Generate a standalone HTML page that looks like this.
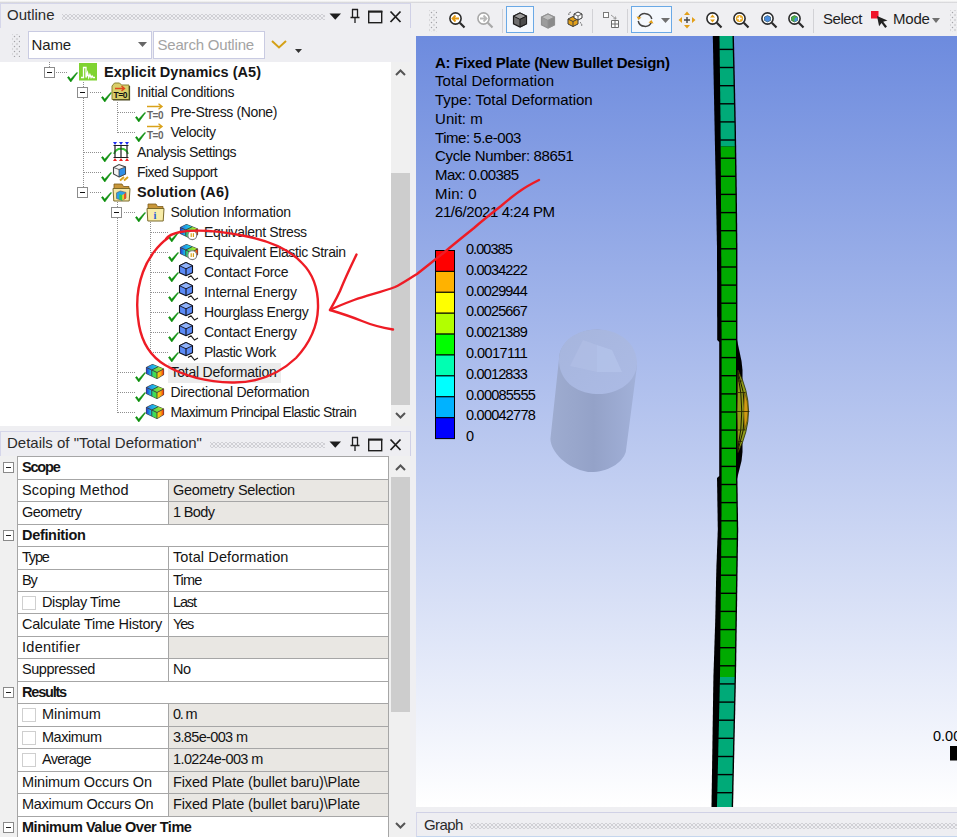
<!DOCTYPE html>
<html>
<head>
<meta charset="utf-8">
<title>Mechanical</title>
<style>
*{box-sizing:border-box;margin:0;padding:0}
html,body{width:957px;height:837px;overflow:hidden;background:#efeff2}
body{position:relative;font-family:"Liberation Sans",sans-serif;color:#1a1a1a}
.abs{position:absolute}
svg{position:absolute;overflow:visible}
#topline{left:0;top:0;width:957px;height:3px;background:linear-gradient(to bottom,#fafafa 0,#f6f6f6 45%,#cfcfd2 70%,#e6e6ea 100%)}
/* panel titles */
.ptitle{position:absolute;left:0;width:411px;border-top:1px solid #d5d6ea;border-right:1px solid #cfd0e6;border-left:1px solid #d5d6ea;background:#eeeef2;font-size:15px;color:#2b2b2b;white-space:nowrap}
.ptitle .t{position:absolute;left:6px;top:2px;line-height:18px}
.dots{position:absolute;height:6px;background-image:radial-gradient(circle,#c2c2c8 0.6px,transparent 0.95px),radial-gradient(circle,#c2c2c8 0.6px,transparent 0.95px);background-size:4px 4px,4px 4px;background-position:0 0,2px 2px}
.vdots{position:absolute;width:8px;background-image:radial-gradient(circle,#a4a4a8 0.7px,transparent 1.05px),radial-gradient(circle,#a4a4a8 0.7px,transparent 1.05px);background-size:5px 5px,5px 5px;background-position:0 0,2.5px 2.5px}
/* tree */
#tree{left:0;top:62px;width:391px;height:364px;background:#fff;overflow:hidden}
.tr{position:absolute;font-size:14px;white-space:nowrap;color:#161616;line-height:20px;height:20px}
.tr.b{font-weight:bold;font-size:14.5px;letter-spacing:0}
.bx{position:absolute;width:11px;height:11px;border:1px solid #8c8c8c;background:#fff}
.bx:after{content:"";position:absolute;left:2px;top:4px;width:5px;height:1px;background:#111}
.hd{position:absolute;height:1px;background-image:linear-gradient(to right,#8f8f8f 1px,transparent 1px);background-size:2px 1px}
.vd{position:absolute;width:1px;background-image:linear-gradient(to bottom,#8f8f8f 1px,transparent 1px);background-size:1px 2px}
.sb{position:absolute;background:#f0f0f0}
.thumb{position:absolute;background:#cdcdcd}
/* details grid */
#grid{left:0;top:456px;width:391px;height:381px;background:#f0f0f0;overflow:hidden}
.row{position:absolute;left:17px;width:372px;height:23.5px;border:1px solid #a6a6a6;background:#fff;font-size:14.5px;white-space:nowrap;color:#141414}
.row .n{position:absolute;left:0;top:0;width:151px;height:100%;border-right:1px solid #a6a6a6;padding-left:4px;line-height:20px;overflow:hidden}
.row .v{position:absolute;left:151px;top:0;right:0;height:100%;padding-left:4px;line-height:20px;overflow:hidden}
.row .v.g{background:#e9e7e3}
.row.h .n{width:100%;border-right:none;font-weight:bold}
.pm{position:absolute;left:3px;width:11px;height:11px;border:1px solid #8a8a8a;background:#fff}
.pm:after{content:"";position:absolute;left:2px;top:4px;width:5px;height:1px;background:#222}
.cb{display:inline-block;width:14px;height:14px;border:1px solid #cfcfcf;background:#fff;vertical-align:-3px;margin:0 6px 0 0}
/* viewport */
#vp{left:416px;top:36px;width:541px;height:771px;background:linear-gradient(to bottom,#6d8bde 0%,#ffffff 100%);overflow:hidden}
.vt{position:absolute;left:19px;font-size:15px;white-space:nowrap;color:#000;line-height:18px}
.vt.b{font-weight:bold}
.lg{position:absolute;left:50px;font-size:14.5px;white-space:nowrap;color:#000;line-height:18px}
</style>
</head>
<body>
<svg style="left:0;top:0" width="0" height="0"><defs>
<linearGradient id="gtl" x1="0" y1="0" x2="1" y2="0"><stop offset="0" stop-color="#2a6ae8"/><stop offset="1" stop-color="#19e8e0"/></linearGradient>
<linearGradient id="gtr" x1="0" y1="0" x2="1" y2="0"><stop offset="0" stop-color="#30d860"/><stop offset="1" stop-color="#c8e820"/></linearGradient>
<linearGradient id="gfl" x1="0" y1="0" x2="1" y2="0"><stop offset="0" stop-color="#2438d8"/><stop offset="1" stop-color="#18d8e8"/></linearGradient>
<linearGradient id="gfr" x1="0" y1="0" x2="1" y2="0"><stop offset="0" stop-color="#20d890"/><stop offset="1" stop-color="#60e020"/></linearGradient>
<linearGradient id="grr" x1="0" y1="0" x2="1" y2="0"><stop offset="0" stop-color="#e8e818"/><stop offset="0.600" stop-color="#f8a010"/><stop offset="1" stop-color="#f03010"/></linearGradient>
</defs></svg>
<div id="topline" class="abs"></div>

<!-- Outline title -->
<div class="ptitle" style="top:3px;height:25px"><span class="t">Outline</span><div class="dots" style="left:61px;top:10px;width:263px"></div>
<svg style="left:329px;top:2.500px" width="78" height="18" viewBox="0 0 78 18"><path d="M-0.500 6.500h11.500l-5.750 6.300z" fill="#1e1e1e"/><path d="M22.5 2v8M27.5 2v8M22 2.5h6M20.500 10.500h9M25 11v5" stroke="#1e1e1e" stroke-width="1.300" fill="none"/><rect x="38.700" y="4.700" width="13" height="11" fill="none" stroke="#1e1e1e" stroke-width="1.400"/><path d="M38 4.500h14.400" stroke="#1e1e1e" stroke-width="2"/><path d="M60.500 4.500l10 10.500M70.500 4.500l-10 10.500" stroke="#1e1e1e" stroke-width="1.800"/></svg>
</div>

<!-- Outline toolbar -->
<div class="abs" id="otb" style="left:0;top:28px;width:411px;height:34px;background:#eeeef2">
<div class="vdots" style="left:12px;top:6px;height:23px"></div>
<div class="abs" style="left:28px;top:3px;width:124px;height:28px;background:#fff;border:1px solid #c9cbe2"></div>
<span class="abs" style="left:31.500px;top:7.500px;font-size:15px;line-height:18px;color:#1e1e1e;letter-spacing:-0.1px">Name</span>
<svg style="left:138px;top:14px" width="9" height="5" viewBox="0 0 9 5"><path d="M0 0h9L4.500 5z" fill="#666"/></svg>
<div class="abs" style="left:153px;top:3px;width:112px;height:28px;background:#fff;border:1px solid #c9cbe2"></div>
<span class="abs" style="left:157.500px;top:7.500px;font-size:15px;line-height:18px;color:#a3a3a3;letter-spacing:-0.2px">Search Outline</span>
<svg style="left:271px;top:12px" width="16" height="9" viewBox="0 0 16 9"><path d="M1 1l7 6.500L15 1" fill="none" stroke="#d4a017" stroke-width="2"/></svg>
<svg style="left:295px;top:21px" width="7" height="4" viewBox="0 0 7 4"><path d="M0 0h7L3.500 4z" fill="#333"/></svg>

</div>

<!-- tree -->
<div id="tree" class="abs">
<div class="vd" style="left:49px;top:0;height:5px"></div>
<div class="vd" style="left:83px;top:20px;height:105px"></div>
<div class="vd" style="left:116.5px;top:40px;height:31px"></div>
<div class="vd" style="left:116.5px;top:140px;height:211px"></div>
<div class="vd" style="left:150px;top:160px;height:131px"></div>
<div class="abs" style="left:168px;top:301px;width:113px;height:20px;background:#ececec"></div>
<div class="hd" style="left:56px;top:10px;width:12px"></div>
<div class="bx" style="left:44px;top:5px"></div>
<svg style="left:67px;top:10px" width="11" height="11" viewBox="0 0 11 11"><path d="M0.500 5.500L3.800 10 10.500 0.800 9.800 0.500 3.600 7.200 1.800 4.600z" fill="#0c8f0c" stroke="#0c8f0c" stroke-width="0.600"/></svg>
<svg style="left:78.5px;top:1px" width="18" height="18" viewBox="0 0 18 18"><rect width="18" height="17.500" fill="#7fd331"/><path d="M2 14.500h2.500V4.500h2.500v10l1.500-5 1.200 5 1.200-3 1.200 3 1-1.500 1 1.500h1.900" fill="none" stroke="#fff" stroke-width="1.300"/></svg>
<span class="tr b" style="left:104px;top:-0.5px;letter-spacing:0.03px">Explicit Dynamics (A5)</span>
<div class="hd" style="left:90px;top:30px;width:11.5px"></div>
<div class="bx" style="left:77px;top:25px"></div>
<svg style="left:100.5px;top:30px" width="11" height="11" viewBox="0 0 11 11"><path d="M0.500 5.500L3.800 10 10.500 0.800 9.800 0.500 3.600 7.200 1.800 4.600z" fill="#0c8f0c" stroke="#0c8f0c" stroke-width="0.600"/></svg>
<svg style="left:110.5px;top:19.5px" width="19" height="19" viewBox="0 0 19 19"><path d="M1 4l2.500-3h5l2 2h7.500v14.500h-17z" fill="#d9cf6a" stroke="#8a8432" stroke-width="1"/><path d="M2 17.800h16.500V4" fill="none" stroke="#4a4720" stroke-width="1.200"/><path d="M4 6.500h9M10.500 4l3 2.500-3 2.500" fill="none" stroke="#e0481c" stroke-width="1.400"/><text x="2.500" y="16" font-family="Liberation Sans,sans-serif" font-weight="bold" font-size="8.500" fill="#111" textLength="14">T=0</text></svg>
<span class="tr" style="left:137px;top:19.5px;letter-spacing:-0.31px">Initial Conditions</span>
<div class="hd" style="left:117.5px;top:50px;width:18.0px"></div>
<svg style="left:134.5px;top:50px" width="11" height="11" viewBox="0 0 11 11"><path d="M0.500 5.500L3.800 10 10.500 0.800 9.800 0.500 3.600 7.200 1.800 4.600z" fill="#0c8f0c" stroke="#0c8f0c" stroke-width="0.600"/></svg>
<svg style="left:146px;top:41px" width="18" height="18" viewBox="0 0 18 18"><path d="M1 3.500h15M12.500 0.800l3.500 2.700-3.500 2.700" fill="none" stroke="#d9a21b" stroke-width="1.400"/><text x="1" y="16" font-family="Liberation Sans,sans-serif" font-weight="bold" font-size="10" fill="#666" textLength="16.500">T=0</text></svg>
<span class="tr" style="left:170.4px;top:39.5px;letter-spacing:-0.36px">Pre-Stress (None)</span>
<div class="hd" style="left:117.5px;top:70px;width:18.0px"></div>
<svg style="left:134.5px;top:70px" width="11" height="11" viewBox="0 0 11 11"><path d="M0.500 5.500L3.800 10 10.500 0.800 9.800 0.500 3.600 7.200 1.800 4.600z" fill="#0c8f0c" stroke="#0c8f0c" stroke-width="0.600"/></svg>
<svg style="left:146px;top:61px" width="18" height="18" viewBox="0 0 18 18"><path d="M1 3.500h15M12.500 0.800l3.500 2.700-3.500 2.700" fill="none" stroke="#d9a21b" stroke-width="1.400"/><text x="1" y="16" font-family="Liberation Sans,sans-serif" font-weight="bold" font-size="10" fill="#666" textLength="16.500">T=0</text></svg>
<span class="tr" style="left:170.4px;top:59.5px;letter-spacing:-0.38px">Velocity</span>
<div class="hd" style="left:84px;top:90px;width:17.5px"></div>
<svg style="left:100.5px;top:90px" width="11" height="11" viewBox="0 0 11 11"><path d="M0.500 5.500L3.800 10 10.500 0.800 9.800 0.500 3.600 7.200 1.800 4.600z" fill="#0c8f0c" stroke="#0c8f0c" stroke-width="0.600"/></svg>
<svg style="left:111.5px;top:80px" width="18" height="20" viewBox="0 0 18 20"><path d="M1 0h4l-2 3zM7 0h4l-2 3zM13 0h4l-2 3z" fill="#1c2cf0"/><path d="M1 19h4l-2-3zM7 19h4l-2-3zM13 19h4l-2-3z" fill="#f02020"/><path d="M2 12C4 5 14 5 16 12" fill="none" stroke="#35c435" stroke-width="1.800"/><path d="M3 3v13M9 3v13M15 3v13M1.500 3.500h15M1.500 15.500h15" fill="none" stroke="#222" stroke-width="1.200"/></svg>
<span class="tr" style="left:137px;top:79.5px;letter-spacing:-0.44px">Analysis Settings</span>
<div class="hd" style="left:84px;top:110px;width:17.5px"></div>
<svg style="left:100.5px;top:110px" width="11" height="11" viewBox="0 0 11 11"><path d="M0.500 5.500L3.800 10 10.500 0.800 9.800 0.500 3.600 7.200 1.800 4.600z" fill="#0c8f0c" stroke="#0c8f0c" stroke-width="0.600"/></svg>
<svg style="left:111.5px;top:101px" width="19" height="19" viewBox="0 0 19 19"><path d="M1.500 4.500L7 1.500l6.500 2.500v7L7 14l-5.500-3z" fill="#f4f4f4" stroke="#444" stroke-width="1.100"/><path d="M7 6.500l6.500-2.500v7L7 14z" fill="#2f8fe6" stroke="#444" stroke-width="0.800"/><path d="M1.500 4.500L7 6.500" stroke="#444" stroke-width="0.800"/><path d="M8 17.500l4-3.500M12 17.500l4-3.500" stroke="#d9a21b" stroke-width="2"/></svg>
<span class="tr" style="left:137px;top:99.5px;letter-spacing:-0.54px">Fixed Support</span>
<div class="hd" style="left:90px;top:130px;width:11.5px"></div>
<div class="bx" style="left:77px;top:125px"></div>
<svg style="left:100.5px;top:130px" width="11" height="11" viewBox="0 0 11 11"><path d="M0.500 5.500L3.800 10 10.500 0.800 9.800 0.500 3.600 7.200 1.800 4.600z" fill="#0c8f0c" stroke="#0c8f0c" stroke-width="0.600"/></svg>
<svg style="left:111.5px;top:121px" width="19" height="19" viewBox="0 0 19 19"><path d="M2 1h8l1.500 2.500H17V6H2z" fill="#c8973a" stroke="#7b5a1a" stroke-width="0.800"/><path d="M1 5.500h17l-0.800 12.500H1.800z" fill="#f5e7a6" stroke="#7b6a2a" stroke-width="1"/><g transform="translate(4.5,7) scale(0.95)"><path d="M0 3l4-2 6 1.500v6l-4 2.500-6-2z" fill="#2aa0e8" stroke="#555" stroke-width="0.600"/><path d="M3 4.500l3 0.700v5.800l-3-1z" fill="#2fd04a"/><path d="M6 5.200l2-1v5.500l-2 1.300z" fill="#f0d020"/><path d="M8 4.200l2-1.200v6l-2 0.700z" fill="#f04a20"/></g></svg>
<span class="tr b" style="left:137px;top:119.5px;letter-spacing:0.15px">Solution (A6)</span>
<div class="hd" style="left:123.5px;top:150px;width:12.0px"></div>
<div class="bx" style="left:111px;top:145px"></div>
<svg style="left:134.5px;top:150px" width="11" height="11" viewBox="0 0 11 11"><path d="M0.500 5.500L3.800 10 10.500 0.800 9.800 0.500 3.600 7.200 1.800 4.600z" fill="#0c8f0c" stroke="#0c8f0c" stroke-width="0.600"/></svg>
<svg style="left:146px;top:141px" width="19" height="19" viewBox="0 0 19 19"><path d="M2 1h8l1.500 2.500H17V6H2z" fill="#c8973a" stroke="#7b5a1a" stroke-width="0.800"/><path d="M1 5.500h17l-0.800 12.500H1.800z" fill="#f7eca8" stroke="#7b6a2a" stroke-width="1"/><text x="7.500" y="16" font-family="Liberation Serif,serif" font-weight="bold" font-size="10.500" fill="#2a5fd6">i</text></svg>
<span class="tr" style="left:170.4px;top:139.5px;letter-spacing:-0.2px">Solution Information</span>
<div class="hd" style="left:151px;top:170px;width:18px"></div>
<svg style="left:168px;top:170px" width="11" height="11" viewBox="0 0 11 11"><path d="M0.500 5.500L3.800 10 10.500 0.800 9.800 0.500 3.600 7.200 1.800 4.600z" fill="#0c8f0c" stroke="#0c8f0c" stroke-width="0.600"/></svg>
<svg style="left:180px;top:161.5px" width="19" height="20" viewBox="0 0 19 20"><path d="M0.500 3.500L6.500 0.500 17.500 5v5.500L11 14.500 0.500 9.500z" fill="#555" stroke="#4a4a4a" stroke-width="1.200" stroke-linejoin="round"/><path d="M0.500 3.500L6.500 0.500 12 2.750 5.750 6z" fill="url(#gtl)"/><path d="M5.750 6L12 2.750 17.500 5 11 8.500z" fill="url(#gtr)"/><path d="M0.500 3.500L5.750 6v6L0.500 9.500z" fill="url(#gfl)"/><path d="M5.750 6L11 8.500v6L5.750 12z" fill="url(#gfr)"/><path d="M11 8.500L17.500 5v5.500L11 14.500z" fill="url(#grr)"/><path d="M0.500 3.500L11 8.500 17.500 5M11 8.500v6M5.750 6v6M5.750 6L12 2.750" fill="none" stroke="#3e3e3e" stroke-width="0.900"/><circle cx="12.300" cy="11.200" r="4.400" fill="#fff" stroke="#808080" stroke-width="1.100"/><path d="M11.200 9.300v3.800M13.400 9.300v3.800" stroke="#d9a21b" stroke-width="1.200"/></svg>
<span class="tr" style="left:204px;top:159.5px;letter-spacing:-0.37px">Equivalent Stress</span>
<div class="hd" style="left:151px;top:190px;width:18px"></div>
<svg style="left:168px;top:190px" width="11" height="11" viewBox="0 0 11 11"><path d="M0.500 5.500L3.800 10 10.500 0.800 9.800 0.500 3.600 7.200 1.800 4.600z" fill="#0c8f0c" stroke="#0c8f0c" stroke-width="0.600"/></svg>
<svg style="left:180px;top:181.5px" width="19" height="20" viewBox="0 0 19 20"><path d="M0.500 3.500L6.500 0.500 17.500 5v5.500L11 14.500 0.500 9.500z" fill="#555" stroke="#4a4a4a" stroke-width="1.200" stroke-linejoin="round"/><path d="M0.500 3.500L6.500 0.500 12 2.750 5.750 6z" fill="url(#gtl)"/><path d="M5.750 6L12 2.750 17.500 5 11 8.500z" fill="url(#gtr)"/><path d="M0.500 3.500L5.750 6v6L0.500 9.500z" fill="url(#gfl)"/><path d="M5.750 6L11 8.500v6L5.750 12z" fill="url(#gfr)"/><path d="M11 8.500L17.500 5v5.500L11 14.500z" fill="url(#grr)"/><path d="M0.500 3.500L11 8.500 17.500 5M11 8.500v6M5.750 6v6M5.750 6L12 2.750" fill="none" stroke="#3e3e3e" stroke-width="0.900"/><circle cx="12.300" cy="11.200" r="4.400" fill="#fff" stroke="#808080" stroke-width="1.100"/><path d="M11.200 9.300v3.800M13.400 9.300v3.800" stroke="#d9a21b" stroke-width="1.200"/></svg>
<span class="tr" style="left:204px;top:179.5px;letter-spacing:-0.37px">Equivalent Elastic Strain</span>
<div class="hd" style="left:151px;top:210px;width:18px"></div>
<svg style="left:168px;top:210px" width="11" height="11" viewBox="0 0 11 11"><path d="M0.500 5.500L3.800 10 10.500 0.800 9.800 0.500 3.600 7.200 1.800 4.600z" fill="#0c8f0c" stroke="#0c8f0c" stroke-width="0.600"/></svg>
<svg style="left:178.5px;top:199.5px" width="20" height="20" viewBox="0 0 20 20"><path d="M7 0.500L13.500 3.700v7L7 13.800 0.500 10.700v-7z" fill="#5a8af6" stroke="#10101c" stroke-width="1.100" stroke-linejoin="round"/><path d="M7 0.500L13.500 3.700 7 6.800 0.500 3.700z" fill="#8fb2fb" stroke="#10101c" stroke-width="0.900" stroke-linejoin="round"/><path d="M7 6.800v7" stroke="#10101c" stroke-width="1.100"/><path d="M9 15.500l3-1.700 3.500 4.200 3.500-2" fill="none" stroke="#1c1c1c" stroke-width="1.100"/></svg>
<span class="tr" style="left:204px;top:199.5px;letter-spacing:-0.28px">Contact Force</span>
<div class="hd" style="left:151px;top:230px;width:18px"></div>
<svg style="left:168px;top:230px" width="11" height="11" viewBox="0 0 11 11"><path d="M0.500 5.500L3.800 10 10.500 0.800 9.800 0.500 3.600 7.200 1.800 4.600z" fill="#0c8f0c" stroke="#0c8f0c" stroke-width="0.600"/></svg>
<svg style="left:178.5px;top:219.5px" width="20" height="20" viewBox="0 0 20 20"><path d="M7 0.500L13.500 3.700v7L7 13.800 0.500 10.700v-7z" fill="#5a8af6" stroke="#10101c" stroke-width="1.100" stroke-linejoin="round"/><path d="M7 0.500L13.500 3.700 7 6.800 0.500 3.700z" fill="#8fb2fb" stroke="#10101c" stroke-width="0.900" stroke-linejoin="round"/><path d="M7 6.800v7" stroke="#10101c" stroke-width="1.100"/><path d="M9 15.500l3-1.700 3.500 4.200 3.500-2" fill="none" stroke="#1c1c1c" stroke-width="1.100"/></svg>
<span class="tr" style="left:204px;top:219.5px;letter-spacing:-0.14px">Internal Energy</span>
<div class="hd" style="left:151px;top:250px;width:18px"></div>
<svg style="left:168px;top:250px" width="11" height="11" viewBox="0 0 11 11"><path d="M0.500 5.500L3.800 10 10.500 0.800 9.800 0.500 3.600 7.200 1.800 4.600z" fill="#0c8f0c" stroke="#0c8f0c" stroke-width="0.600"/></svg>
<svg style="left:178.5px;top:239.5px" width="20" height="20" viewBox="0 0 20 20"><path d="M7 0.500L13.500 3.700v7L7 13.800 0.500 10.700v-7z" fill="#5a8af6" stroke="#10101c" stroke-width="1.100" stroke-linejoin="round"/><path d="M7 0.500L13.500 3.700 7 6.800 0.500 3.700z" fill="#8fb2fb" stroke="#10101c" stroke-width="0.900" stroke-linejoin="round"/><path d="M7 6.800v7" stroke="#10101c" stroke-width="1.100"/><path d="M9 15.500l3-1.700 3.500 4.200 3.500-2" fill="none" stroke="#1c1c1c" stroke-width="1.100"/></svg>
<span class="tr" style="left:204px;top:239.5px;letter-spacing:-0.44px">Hourglass Energy</span>
<div class="hd" style="left:151px;top:270px;width:18px"></div>
<svg style="left:168px;top:270px" width="11" height="11" viewBox="0 0 11 11"><path d="M0.500 5.500L3.800 10 10.500 0.800 9.800 0.500 3.600 7.200 1.800 4.600z" fill="#0c8f0c" stroke="#0c8f0c" stroke-width="0.600"/></svg>
<svg style="left:178.5px;top:259.5px" width="20" height="20" viewBox="0 0 20 20"><path d="M7 0.500L13.500 3.700v7L7 13.800 0.500 10.700v-7z" fill="#5a8af6" stroke="#10101c" stroke-width="1.100" stroke-linejoin="round"/><path d="M7 0.500L13.500 3.700 7 6.800 0.500 3.700z" fill="#8fb2fb" stroke="#10101c" stroke-width="0.900" stroke-linejoin="round"/><path d="M7 6.800v7" stroke="#10101c" stroke-width="1.100"/><path d="M9 15.500l3-1.700 3.500 4.200 3.500-2" fill="none" stroke="#1c1c1c" stroke-width="1.100"/></svg>
<span class="tr" style="left:204px;top:259.5px;letter-spacing:-0.27px">Contact Energy</span>
<div class="hd" style="left:151px;top:290px;width:18px"></div>
<svg style="left:168px;top:290px" width="11" height="11" viewBox="0 0 11 11"><path d="M0.500 5.500L3.800 10 10.500 0.800 9.800 0.500 3.600 7.200 1.800 4.600z" fill="#0c8f0c" stroke="#0c8f0c" stroke-width="0.600"/></svg>
<svg style="left:178.5px;top:279.5px" width="20" height="20" viewBox="0 0 20 20"><path d="M7 0.500L13.500 3.700v7L7 13.800 0.500 10.700v-7z" fill="#5a8af6" stroke="#10101c" stroke-width="1.100" stroke-linejoin="round"/><path d="M7 0.500L13.500 3.700 7 6.800 0.500 3.700z" fill="#8fb2fb" stroke="#10101c" stroke-width="0.900" stroke-linejoin="round"/><path d="M7 6.800v7" stroke="#10101c" stroke-width="1.100"/><path d="M9 15.500l3-1.700 3.500 4.200 3.500-2" fill="none" stroke="#1c1c1c" stroke-width="1.100"/></svg>
<span class="tr" style="left:204px;top:279.5px;letter-spacing:-0.48px">Plastic Work</span>
<div class="hd" style="left:117.5px;top:310px;width:18.0px"></div>
<svg style="left:134.5px;top:310px" width="11" height="11" viewBox="0 0 11 11"><path d="M0.500 5.500L3.800 10 10.500 0.800 9.800 0.500 3.600 7.200 1.800 4.600z" fill="#0c8f0c" stroke="#0c8f0c" stroke-width="0.600"/></svg>
<svg style="left:146px;top:302px" width="19" height="20" viewBox="0 0 19 20"><path d="M0.500 3.500L6.500 0.500 17.500 5v5.500L11 14.500 0.500 9.500z" fill="#555" stroke="#4a4a4a" stroke-width="1.200" stroke-linejoin="round"/><path d="M0.500 3.500L6.500 0.500 12 2.750 5.750 6z" fill="url(#gtl)"/><path d="M5.750 6L12 2.750 17.500 5 11 8.500z" fill="url(#gtr)"/><path d="M0.500 3.500L5.750 6v6L0.500 9.500z" fill="url(#gfl)"/><path d="M5.750 6L11 8.500v6L5.750 12z" fill="url(#gfr)"/><path d="M11 8.500L17.500 5v5.500L11 14.500z" fill="url(#grr)"/><path d="M0.500 3.500L11 8.500 17.500 5M11 8.500v6M5.750 6v6M5.750 6L12 2.750" fill="none" stroke="#3e3e3e" stroke-width="0.900"/></svg>
<span class="tr" style="left:170.4px;top:299.5px;letter-spacing:-0.21px">Total Deformation</span>
<div class="hd" style="left:117.5px;top:330px;width:18.0px"></div>
<svg style="left:134.5px;top:330px" width="11" height="11" viewBox="0 0 11 11"><path d="M0.500 5.500L3.800 10 10.500 0.800 9.800 0.500 3.600 7.200 1.800 4.600z" fill="#0c8f0c" stroke="#0c8f0c" stroke-width="0.600"/></svg>
<svg style="left:146px;top:322px" width="19" height="20" viewBox="0 0 19 20"><path d="M0.500 3.500L6.500 0.500 17.500 5v5.500L11 14.500 0.500 9.500z" fill="#555" stroke="#4a4a4a" stroke-width="1.200" stroke-linejoin="round"/><path d="M0.500 3.500L6.500 0.500 12 2.750 5.750 6z" fill="url(#gtl)"/><path d="M5.750 6L12 2.750 17.500 5 11 8.500z" fill="url(#gtr)"/><path d="M0.500 3.500L5.750 6v6L0.500 9.500z" fill="url(#gfl)"/><path d="M5.750 6L11 8.500v6L5.750 12z" fill="url(#gfr)"/><path d="M11 8.500L17.500 5v5.500L11 14.500z" fill="url(#grr)"/><path d="M0.500 3.500L11 8.500 17.500 5M11 8.500v6M5.750 6v6M5.750 6L12 2.750" fill="none" stroke="#3e3e3e" stroke-width="0.900"/></svg>
<span class="tr" style="left:170.4px;top:319.5px;letter-spacing:-0.33px">Directional Deformation</span>
<div class="hd" style="left:117.5px;top:350px;width:18.0px"></div>
<svg style="left:134.5px;top:350px" width="11" height="11" viewBox="0 0 11 11"><path d="M0.500 5.500L3.800 10 10.500 0.800 9.800 0.500 3.600 7.200 1.800 4.600z" fill="#0c8f0c" stroke="#0c8f0c" stroke-width="0.600"/></svg>
<svg style="left:146px;top:342px" width="19" height="20" viewBox="0 0 19 20"><path d="M0.500 3.500L6.500 0.500 17.500 5v5.500L11 14.500 0.500 9.500z" fill="#555" stroke="#4a4a4a" stroke-width="1.200" stroke-linejoin="round"/><path d="M0.500 3.500L6.500 0.500 12 2.750 5.750 6z" fill="url(#gtl)"/><path d="M5.750 6L12 2.750 17.500 5 11 8.500z" fill="url(#gtr)"/><path d="M0.500 3.500L5.750 6v6L0.500 9.500z" fill="url(#gfl)"/><path d="M5.750 6L11 8.500v6L5.750 12z" fill="url(#gfr)"/><path d="M11 8.500L17.500 5v5.500L11 14.500z" fill="url(#grr)"/><path d="M0.500 3.500L11 8.500 17.500 5M11 8.500v6M5.750 6v6M5.750 6L12 2.750" fill="none" stroke="#3e3e3e" stroke-width="0.900"/></svg>
<span class="tr" style="left:170.4px;top:339.5px;letter-spacing:-0.56px">Maximum Principal Elastic Strain</span>
</div>
<div class="sb" style="left:391px;top:62px;width:19px;height:364px"><div class="thumb" style="left:0;top:111px;width:19px;height:232px"></div>
<svg style="left:4px;top:7px" width="11" height="7" viewBox="0 0 11 7"><path d="M1 6l4.500-4.500L10 6" fill="none" stroke="#555" stroke-width="2"/></svg>
<svg style="left:4px;top:350px" width="11" height="7" viewBox="0 0 11 7"><path d="M1 1l4.500 4.500L10 1" fill="none" stroke="#555" stroke-width="2"/></svg>
</div>

<!-- Details title -->
<div class="ptitle" style="top:431px;height:25px"><span class="t">Details of "Total Deformation"</span><div class="dots" style="left:209px;top:10px;width:115px"></div>
<svg style="left:329px;top:2.500px" width="78" height="18" viewBox="0 0 78 18"><path d="M-0.500 6.500h11.500l-5.750 6.300z" fill="#1e1e1e"/><path d="M22.500 2v8M27.500 2v8M22 2.500h6M20.500 10.500h9M25 11v5" stroke="#1e1e1e" stroke-width="1.300" fill="none"/><rect x="38.700" y="4.700" width="13" height="11" fill="none" stroke="#1e1e1e" stroke-width="1.400"/><path d="M38 4.500h14.400" stroke="#1e1e1e" stroke-width="2"/><path d="M60.500 4.500l10 10.500M70.500 4.500l-10 10.500" stroke="#1e1e1e" stroke-width="1.800"/></svg>
</div>

<!-- Details grid -->
<div id="grid" class="abs">
<div class="pm" style="top:6px"></div>
<div class="row h" style="top:0.3px"><div class="n"><span style="letter-spacing:-1.2px">Scope</span></div></div>
<div class="row" style="top:22.75px"><div class="n"><span style="letter-spacing:0.14px">Scoping Method</span></div><div class="v g"><span style="letter-spacing:-0.31px">Geometry Selection</span></div></div>
<div class="row" style="top:45.2px"><div class="n"><span style="letter-spacing:-0.52px">Geometry</span></div><div class="v g"><span style="letter-spacing:-0.63px">1 Body</span></div></div>
<div class="pm" style="top:74px"></div>
<div class="row h" style="top:67.65px"><div class="n"><span style="letter-spacing:-0.32px">Definition</span></div></div>
<div class="row" style="top:90.1px"><div class="n"><span style="letter-spacing:-1.2px">Type</span></div><div class="v"><span style="letter-spacing:0.11px">Total Deformation</span></div></div>
<div class="row" style="top:112.55px"><div class="n"><span style="letter-spacing:-1.2px">By</span></div><div class="v"><span style="letter-spacing:-0.76px">Time</span></div></div>
<div class="row" style="top:135.0px"><div class="n"><span class="cb"></span><span style="letter-spacing:-0.4px">Display Time</span></div><div class="v"><span style="letter-spacing:-1.14px">Last</span></div></div>
<div class="row" style="top:157.45px"><div class="n"><span style="letter-spacing:-0.23px">Calculate Time History</span></div><div class="v"><span style="letter-spacing:-1.2px">Yes</span></div></div>
<div class="row" style="top:179.9px"><div class="n"><span style="letter-spacing:0.27px">Identifier</span></div><div class="v g"></div></div>
<div class="row" style="top:202.35px"><div class="n"><span style="letter-spacing:-0.45px">Suppressed</span></div><div class="v"><span style="letter-spacing:-0.54px">No</span></div></div>
<div class="pm" style="top:231px"></div>
<div class="row h" style="top:224.8px"><div class="n"><span style="letter-spacing:-1.2px">Results</span></div></div>
<div class="row" style="top:247.25px"><div class="n"><span class="cb"></span><span style="letter-spacing:-0.0px">Minimum</span></div><div class="v g"><span style="letter-spacing:-1.2px">0. m</span></div></div>
<div class="row" style="top:269.7px"><div class="n"><span class="cb"></span><span style="letter-spacing:-0.47px">Maximum</span></div><div class="v g"><span style="letter-spacing:-0.64px">3.85e-003 m</span></div></div>
<div class="row" style="top:292.15px"><div class="n"><span class="cb"></span><span style="letter-spacing:-0.71px">Average</span></div><div class="v g"><span style="letter-spacing:-0.6px">1.0224e-003 m</span></div></div>
<div class="row" style="top:314.6px"><div class="n"><span style="letter-spacing:-0.13px">Minimum Occurs On</span></div><div class="v g"><span style="letter-spacing:-0.13px">Fixed Plate (bullet baru)\Plate</span></div></div>
<div class="row" style="top:337.05px"><div class="n"><span style="letter-spacing:-0.28px">Maximum Occurs On</span></div><div class="v g"><span style="letter-spacing:-0.13px">Fixed Plate (bullet baru)\Plate</span></div></div>
<div class="pm" style="top:366px"></div>
<div class="row h" style="top:359.5px"><div class="n"><span style="letter-spacing:-0.47px">Minimum Value Over Time</span></div></div>
</div>
<div class="sb" style="left:391px;top:456px;width:19px;height:381px"><div class="thumb" style="left:0;top:21px;width:19px;height:235px"></div>
<svg style="left:4px;top:8px" width="11" height="7" viewBox="0 0 11 7"><path d="M1 6l4.500-4.500L10 6" fill="none" stroke="#555" stroke-width="2"/></svg>
<svg style="left:4px;top:366px" width="11" height="7" viewBox="0 0 11 7"><path d="M1 1l4.500 4.500L10 1" fill="none" stroke="#555" stroke-width="2"/></svg>
</div>

<!-- Right toolbar -->
<div class="abs" id="rtb" style="left:416px;top:3px;width:541px;height:33px">
<div class="vdots" style="left:13px;top:7px;height:22px"></div>
<svg style="left:32px;top:8px" width="18" height="18" viewBox="0 0 18 18"><circle cx="7.500" cy="7.500" r="5.600" fill="#fff" stroke="#2b2b2b" stroke-width="1.600"/><path d="M11.800 11.800L16.500 16.500" stroke="#2b2b2b" stroke-width="2.200"/><path d="M11 7.500H5M7.500 4.500L4.500 7.500l3 3" fill="none" stroke="#e39a14" stroke-width="1.800"/></svg>
<svg style="left:60px;top:8px" width="18" height="18" viewBox="0 0 18 18"><circle cx="7.500" cy="7.500" r="5.600" fill="#fff" stroke="#a8a8a8" stroke-width="1.600"/><path d="M11.800 11.800L16.500 16.500" stroke="#a8a8a8" stroke-width="2.200"/><path d="M4 7.500h6M7.500 4.500l3 3-3 3" fill="none" stroke="#b8b8b8" stroke-width="1.800"/></svg>
<div class="abs" style="left:85.5px;top:6px;width:1px;height:24px;background:#d2d2d6"></div>
<div class="abs" style="left:90px;top:3px;width:28px;height:27px;border:1px solid #6aa9e6;background:#f4f8fd"></div>
<svg style="left:96px;top:9px" width="16" height="16" viewBox="0 0 16 16"><path d="M8 1L14.500 4.200v7.600L8 15 1.500 11.800V4.200z" fill="#6e6e6e" stroke="#1c1c1c" stroke-width="1.200"/><path d="M8 1L14.500 4.200 8 7.400 1.500 4.200z" fill="#9a9a9a" stroke="#1c1c1c" stroke-width="1"/><path d="M8 7.400L14.500 4.200v7.600L8 15z" fill="#4c4c4c" stroke="#1c1c1c" stroke-width="1"/></svg>
<svg style="left:124px;top:10px" width="16" height="16" viewBox="0 0 16 16"><path d="M8 1L14.500 4.200v7.600L8 15 1.500 11.800V4.200z" fill="#9c9c9c" stroke="#909090" stroke-width="1.200"/><path d="M8 1L14.500 4.200 8 7.400 1.500 4.200z" fill="#bdbdbd" stroke="#909090" stroke-width="1"/><path d="M8 7.400L14.500 4.200v7.600L8 15z" fill="#8a8a8a" stroke="#909090" stroke-width="1"/></svg>
<svg style="left:149px;top:7px" width="20" height="20" viewBox="0 0 20 20"><path d="M3 9l5-2.500 5 2.500v5l-5 2.500-5-2.500z" fill="#e3a019" stroke="#3a3a3a" stroke-width="1"/><path d="M3 9l5 2.500 5-2.500M8 11.500v5" fill="none" stroke="#3a3a3a" stroke-width="0.900"/><path d="M9 4l4-2 4 2v4l-4 2-4-2z" fill="#fff" stroke="#3a3a3a" stroke-width="1"/><path d="M9 4l4 2 4-2M13 6v4" fill="none" stroke="#3a3a3a" stroke-width="0.800"/><path d="M15 12.500q2.500 1 1.500 4M4 5q-1-2.500 2.500-3" fill="none" stroke="#555" stroke-width="1" stroke-dasharray="1.500 1"/></svg>
<div class="abs" style="left:175.5px;top:6px;width:1px;height:24px;background:#d2d2d6"></div>
<svg style="left:185.5px;top:8px" width="18" height="18" viewBox="0 0 18 18"><rect x="1.500" y="1.500" width="5" height="5" fill="#fff" stroke="#7a7a7a" stroke-width="1"/><path d="M9 4l5 4M14 8l-0.500-2.500M14 8l-2.500-0.300" stroke="#9a9a9a" stroke-width="1" fill="none"/><path d="M9.500 9.500h7v7h-7zM13 9.500v7M9.500 13h7" fill="#fff" stroke="#6a6a6a" stroke-width="1"/></svg>
<div class="abs" style="left:210.5px;top:6px;width:1px;height:24px;background:#d2d2d6"></div>
<div class="abs" style="left:215px;top:3px;width:41px;height:27px;border:1px solid #6aa9e6;background:#f4f8fd"></div>
<svg style="left:219.5px;top:8px" width="18" height="18" viewBox="0 0 18 18"><path d="M2.500 7A7 7 0 0 1 15.800 8" fill="none" stroke="#444" stroke-width="1.500"/><path d="M15.500 11A7 7 0 0 1 2.200 10" fill="none" stroke="#444" stroke-width="1.500"/><path d="M0.500 5.500l2 3.500 3-2.500z" fill="#e3a019"/><path d="M17.500 12.500l-2-3.500-3 2.500z" fill="#e3a019"/></svg>
<svg style="left:245px;top:15px" width="9" height="5" viewBox="0 0 9 5"><path d="M0 0h9L4.500 5z" fill="#707070"/></svg>
<svg style="left:261.5px;top:8px" width="18" height="18" viewBox="0 0 18 18"><path d="M9 0.500l3 3.500H6zM9 17.500l3-3.500H6zM0.500 9l3.500-3v6zM17.500 9l-3.500-3v6z" fill="#e3a019"/><path d="M9 6v6M6 9h6" stroke="#444" stroke-width="1.400"/></svg>
<svg style="left:288.5px;top:8px" width="18" height="18" viewBox="0 0 18 18"><circle cx="7.500" cy="7.500" r="5.600" fill="#fff" stroke="#2b2b2b" stroke-width="1.600"/><path d="M11.800 11.800L16.500 16.500" stroke="#2b2b2b" stroke-width="2.200"/><path d="M7.500 3.500l2.500 3h-5zM7.500 11.500l2.500-3h-5z" fill="#e3a019"/></svg>
<svg style="left:316px;top:8px" width="18" height="18" viewBox="0 0 18 18"><circle cx="7.500" cy="7.500" r="5.600" fill="#fff" stroke="#2b2b2b" stroke-width="1.600"/><path d="M11.800 11.800L16.500 16.500" stroke="#2b2b2b" stroke-width="2.200"/><circle cx="7.500" cy="7.500" r="3.600" fill="#e8a820"/><path d="M7.500 5.300v4.400M5.300 7.500h4.400" stroke="#fff" stroke-width="1.300"/></svg>
<svg style="left:343.5px;top:8px" width="18" height="18" viewBox="0 0 18 18"><circle cx="7.500" cy="7.500" r="5.600" fill="#fff" stroke="#2b2b2b" stroke-width="1.600"/><path d="M11.800 11.800L16.500 16.500" stroke="#2b2b2b" stroke-width="2.200"/><path d="M4.500 6l3-1.500 3 1.500v3.500l-3 1.500-3-1.500z" fill="#4a8de0" stroke="#245" stroke-width="0.600"/></svg>
<svg style="left:371px;top:8px" width="18" height="18" viewBox="0 0 18 18"><circle cx="7.500" cy="7.500" r="5.600" fill="#fff" stroke="#2b2b2b" stroke-width="1.600"/><path d="M11.800 11.800L16.500 16.500" stroke="#2b2b2b" stroke-width="2.200"/><path d="M4.500 6l3-1.500 3 1.500v3.500l-3 1.500-3-1.500z" fill="#4ab04a" stroke="#252" stroke-width="0.600"/><path d="M7.500 7.500l3-1.500v3.500l-3 1.500z" fill="#4a8de0"/></svg>
<div class="abs" style="left:397px;top:6px;width:1px;height:24px;background:#d2d2d6"></div>
<span class="abs" style="left:407px;top:7px;font-size:15px;line-height:18px;color:#1e1e1e;letter-spacing:-0.45px">Select</span>
<svg style="left:455px;top:8px" width="18" height="18" viewBox="0 0 18 18"><rect x="0" y="0" width="7.500" height="7.500" fill="#f0142a"/><path d="M6 5l10.500 4.500-4.300 1.200 3.800 4.800-1.800 1.400-3.700-4.900-2.400 3.300z" fill="#222"/></svg>
<span class="abs" style="left:477px;top:7px;font-size:15px;line-height:18px;color:#1e1e1e;letter-spacing:-0.2px">Mode</span>
<svg style="left:516px;top:15px" width="8" height="5" viewBox="0 0 8 5"><path d="M0 0h8L4 5z" fill="#707070"/></svg>
<div class="vdots" style="left:534px;top:7px;height:22px"></div>
</div>

<!-- viewport -->
<div id="vp" class="abs">
<svg style="left:0;top:0" width="541" height="771" viewBox="416 36 541 771"><defs><linearGradient id="gb" x1="0" y1="0" x2="1" y2="0"><stop offset="0" stop-color="#9eacd0"/><stop offset="0.5" stop-color="#94a2c8"/><stop offset="1" stop-color="#a2b1d9"/></linearGradient><linearGradient id="gc" x1="0" y1="0" x2="1" y2="1"><stop offset="0" stop-color="#a6b5dd"/><stop offset="1" stop-color="#acbbe5"/></linearGradient></defs><path d="M559 359 L550.400 439 C551 452 566 468 588 472 C606 473 622 464 625.800 452 L637 366 C636 340 610 329 597 329.400 C578 329.400 559 342 559 359z" fill="url(#gb)"/><path d="M559 360 C559 340 578 329.400 597 329.400 C618 329.400 637 342 637 364 C636 382 618 395 596 394 C575 393 559 380 559 360z" fill="url(#gc)"/><path d="M583 340 L597 345 L597 372 L570 366z" fill="#b2c0e6" opacity="0.6"/><path d="M597 345 L612 350 L622 372 L597 372z" fill="#b8c6ec" opacity="0.6"/><polygon points="712.8,36.0 712.8,38.0 712.9,40.0 712.9,42.0 713.0,44.0 713.0,46.0 713.0,48.0 713.1,50.0 713.1,52.0 713.2,54.0 713.2,56.0 713.2,58.0 713.3,60.0 713.3,62.0 713.3,64.0 713.4,66.0 713.4,68.0 713.5,70.0 713.5,72.0 713.5,74.0 713.6,76.0 713.6,78.0 713.7,80.0 713.7,82.0 713.7,84.0 713.8,86.0 713.8,88.0 713.9,90.0 713.9,92.0 713.9,94.0 714.0,96.0 714.0,98.0 714.1,100.0 714.1,102.0 714.1,104.0 714.2,106.0 714.2,108.0 714.2,110.0 714.3,112.0 714.3,114.0 714.4,116.0 714.4,118.0 714.4,120.0 714.5,122.0 714.5,124.0 714.6,126.0 714.6,128.0 714.6,130.0 714.7,132.0 714.7,134.0 714.8,136.0 714.8,138.0 714.8,140.0 714.9,142.0 714.9,144.0 715.0,146.0 715.0,148.0 715.0,150.0 715.1,152.0 715.1,154.0 715.2,156.0 715.2,158.0 715.2,160.0 715.3,162.0 715.3,164.0 715.4,166.0 715.4,168.0 715.5,170.0 715.5,172.0 715.5,174.0 715.6,176.0 715.6,178.0 715.7,180.0 715.7,182.0 715.7,184.0 715.8,186.0 715.8,188.0 715.9,190.0 715.9,192.0 715.9,194.0 716.0,196.0 716.0,198.0 716.1,200.0 716.1,202.0 716.1,204.0 716.2,206.0 716.2,208.0 716.3,210.0 716.3,212.0 716.3,214.0 716.4,216.0 716.4,218.0 716.5,220.0 716.5,222.0 716.5,224.0 716.6,226.0 716.6,228.0 716.6,230.0 716.7,232.0 716.7,234.0 716.8,236.0 716.8,238.0 716.8,240.0 716.9,242.0 716.9,244.0 717.0,246.0 717.0,248.0 717.0,250.0 717.0,252.0 717.0,254.0 717.0,256.0 717.0,258.0 717.0,260.0 717.0,262.0 717.0,264.0 717.0,266.0 717.0,268.0 717.0,270.0 717.1,272.0 717.1,274.0 717.1,276.0 717.1,278.0 717.1,280.0 717.1,282.0 717.1,284.0 717.1,286.0 717.1,288.0 717.1,290.0 717.1,292.0 717.1,294.0 717.1,296.0 717.1,298.0 717.1,300.0 717.1,302.0 717.1,304.0 717.1,306.0 717.1,308.0 717.1,310.0 717.1,312.0 717.1,314.0 717.1,316.0 717.2,318.0 717.2,320.0 717.2,322.0 717.2,324.0 717.2,326.0 717.2,328.0 717.2,330.0 717.2,332.0 717.2,334.0 717.2,336.0 717.2,338.0 717.2,340.0 719.2,342.0 719.2,344.0 719.2,346.0 719.2,348.0 719.2,350.0 719.2,352.0 719.2,354.0 719.2,356.0 719.2,358.0 719.2,360.0 719.2,362.0 719.2,364.0 719.2,366.0 719.2,368.0 719.2,370.0 719.2,372.0 719.2,374.0 719.2,376.0 719.2,378.0 719.2,380.0 719.2,382.0 719.2,384.0 719.2,386.0 719.2,388.0 719.2,390.0 719.2,392.0 719.2,394.0 719.2,396.0 719.2,398.0 719.2,400.0 719.2,402.0 719.2,404.0 719.2,406.0 719.2,408.0 719.2,410.0 719.2,412.0 719.2,414.0 719.2,416.0 719.2,418.0 719.2,420.0 719.2,422.0 719.2,424.0 719.2,426.0 719.2,428.0 719.2,430.0 719.2,432.0 719.2,434.0 719.2,436.0 719.2,438.0 719.2,440.0 719.2,442.0 719.2,444.0 719.2,446.0 719.2,448.0 719.2,450.0 719.2,452.0 719.2,454.0 719.2,456.0 719.2,458.0 719.2,460.0 719.2,462.0 719.2,464.0 719.2,466.0 719.2,468.0 719.2,470.0 719.2,472.0 719.2,474.0 719.2,476.0 717.0,478.0 717.0,480.0 717.1,482.0 717.1,484.0 717.1,486.0 717.2,488.0 717.2,490.0 717.2,492.0 717.3,494.0 717.3,496.0 717.3,498.0 717.3,500.0 717.4,502.0 717.4,504.0 717.4,506.0 717.5,508.0 717.5,510.0 717.5,512.0 717.6,514.0 717.6,516.0 717.6,518.0 717.6,520.0 717.7,522.0 717.7,524.0 717.7,526.0 717.8,528.0 717.8,530.0 717.7,532.0 717.6,534.0 717.6,536.0 717.5,538.0 717.4,540.0 717.3,542.0 717.3,544.0 717.2,546.0 717.1,548.0 717.0,550.0 717.0,552.0 716.9,554.0 716.8,556.0 716.8,558.0 716.7,560.0 716.6,562.0 716.5,564.0 716.4,566.0 716.4,568.0 716.3,570.0 716.3,572.0 716.2,574.0 716.2,576.0 716.1,578.0 716.1,580.0 716.0,582.0 716.0,584.0 716.0,586.0 715.9,588.0 715.9,590.0 715.8,592.0 715.8,594.0 715.8,596.0 715.7,598.0 715.7,600.0 715.6,602.0 715.6,604.0 715.5,606.0 715.5,608.0 715.5,610.0 715.4,612.0 715.4,614.0 715.3,616.0 715.3,618.0 715.2,620.0 715.2,622.0 715.1,624.0 715.1,626.0 715.0,628.0 714.9,630.0 714.9,632.0 714.8,634.0 714.7,636.0 714.7,638.0 714.6,640.0 714.5,642.0 714.5,644.0 714.4,646.0 714.3,648.0 714.3,650.0 714.2,652.0 714.2,654.0 714.1,656.0 714.0,658.0 714.0,660.0 713.9,662.0 713.8,664.0 713.8,666.0 713.7,668.0 713.6,670.0 713.6,672.0 713.5,674.0 713.4,676.0 713.4,678.0 713.4,680.0 713.3,682.0 713.3,684.0 713.3,686.0 713.2,688.0 713.2,690.0 713.2,692.0 713.1,694.0 713.1,696.0 713.1,698.0 713.1,700.0 713.0,702.0 713.0,704.0 713.0,706.0 712.9,708.0 712.9,710.0 712.9,712.0 712.9,714.0 712.8,716.0 712.8,718.0 712.8,720.0 712.7,722.0 712.7,724.0 712.7,726.0 712.6,728.0 712.6,730.0 712.6,732.0 712.6,734.0 712.5,736.0 712.5,738.0 712.5,740.0 712.4,742.0 712.4,744.0 712.4,746.0 712.4,748.0 712.3,750.0 712.3,752.0 712.3,754.0 712.2,756.0 712.2,758.0 712.2,760.0 712.1,762.0 712.1,764.0 712.1,766.0 712.1,768.0 712.0,770.0 712.0,772.0 712.0,774.0 711.9,776.0 711.9,778.0 711.9,780.0 711.9,782.0 711.8,784.0 711.8,786.0 711.8,788.0 711.7,790.0 711.7,792.0 711.7,794.0 711.6,796.0 711.6,798.0 711.6,800.0 711.6,802.0 711.5,804.0 711.5,806.0 711.5,808.0 733.1,808.0 733.1,806.0 733.1,804.0 733.2,802.0 733.2,800.0 733.3,798.0 733.3,796.0 733.4,794.0 733.4,792.0 733.5,790.0 733.5,788.0 733.5,786.0 733.6,784.0 733.6,782.0 733.7,780.0 733.7,778.0 733.8,776.0 733.8,774.0 733.9,772.0 733.9,770.0 734.0,768.0 734.0,766.0 734.0,764.0 734.1,762.0 734.1,760.0 734.2,758.0 734.2,756.0 734.3,754.0 734.3,752.0 734.4,750.0 734.4,748.0 734.4,746.0 734.5,744.0 734.5,742.0 734.6,740.0 734.6,738.0 734.7,736.0 734.7,734.0 734.8,732.0 734.8,730.0 734.9,728.0 734.9,726.0 734.9,724.0 735.0,722.0 735.0,720.0 735.1,718.0 735.1,716.0 735.2,714.0 735.2,712.0 735.3,710.0 735.3,708.0 735.3,706.0 735.4,704.0 735.4,702.0 735.5,700.0 735.5,698.0 735.6,696.0 735.6,694.0 735.7,692.0 735.7,690.0 735.8,688.0 735.8,686.0 735.8,684.0 735.9,682.0 735.9,680.0 736.0,678.0 736.0,676.0 736.0,674.0 736.1,672.0 736.1,670.0 736.1,668.0 736.2,666.0 736.2,664.0 736.2,662.0 736.3,660.0 736.3,658.0 736.3,656.0 736.3,654.0 736.4,652.0 736.4,650.0 736.4,648.0 736.5,646.0 736.5,644.0 736.5,642.0 736.6,640.0 736.6,638.0 736.6,636.0 736.6,634.0 736.7,632.0 736.7,630.0 736.7,628.0 736.8,626.0 736.8,624.0 736.8,622.0 736.9,620.0 736.9,618.0 736.9,616.0 736.9,614.0 737.0,612.0 737.0,610.0 737.0,608.0 737.1,606.0 737.1,604.0 737.1,602.0 737.2,600.0 737.2,598.0 737.2,596.0 737.2,594.0 737.3,592.0 737.3,590.0 737.3,588.0 737.4,586.0 737.4,584.0 737.4,582.0 737.5,580.0 737.5,578.0 737.5,576.0 737.5,574.0 737.6,572.0 737.6,570.0 737.6,568.0 737.7,566.0 737.7,564.0 737.7,562.0 737.8,560.0 737.8,558.0 737.8,556.0 737.8,554.0 737.9,552.0 737.9,550.0 737.9,548.0 738.0,546.0 738.0,544.0 738.0,542.0 738.1,540.0 738.1,538.0 738.1,536.0 738.1,534.0 738.2,532.0 738.2,530.0 738.2,528.0 738.1,526.0 738.1,524.0 738.1,522.0 738.0,520.0 738.0,518.0 738.0,516.0 738.0,514.0 737.9,512.0 737.9,510.0 737.9,508.0 737.8,506.0 737.8,504.0 737.8,502.0 737.7,500.0 737.7,498.0 737.7,496.0 737.7,494.0 737.6,492.0 737.6,490.0 737.6,488.0 737.5,486.0 737.5,484.0 737.5,482.0 737.4,480.0 737.4,478.0 737.4,476.0 737.4,474.0 737.4,472.0 737.4,470.0 737.4,468.0 737.4,466.0 737.4,464.0 737.4,462.0 737.4,460.0 737.4,458.0 737.4,456.0 737.4,454.0 737.4,452.0 737.4,450.0 737.4,448.0 737.4,446.0 737.4,444.0 737.4,442.0 737.4,440.0 737.4,438.0 737.4,436.0 737.4,434.0 737.4,432.0 737.4,430.0 737.4,428.0 737.4,426.0 737.4,424.0 737.4,422.0 737.4,420.0 737.4,418.0 737.4,416.0 737.4,414.0 737.4,412.0 737.4,410.0 737.4,408.0 737.4,406.0 737.4,404.0 737.4,402.0 737.4,400.0 737.4,398.0 737.4,396.0 737.4,394.0 737.4,392.0 737.4,390.0 737.4,388.0 737.4,386.0 737.4,384.0 737.4,382.0 737.4,380.0 737.4,378.0 737.4,376.0 737.4,374.0 737.4,372.0 737.4,370.0 737.4,368.0 737.4,366.0 737.4,364.0 737.4,362.0 737.4,360.0 737.4,358.0 737.4,356.0 737.4,354.0 737.4,352.0 737.4,350.0 737.4,348.0 737.4,346.0 737.4,344.0 737.4,342.0 737.4,340.0 737.4,338.0 737.4,336.0 737.4,334.0 737.4,332.0 737.4,330.0 737.4,328.0 737.4,326.0 737.4,324.0 737.4,322.0 737.4,320.0 737.4,318.0 737.4,316.0 737.4,314.0 737.4,312.0 737.4,310.0 737.4,308.0 737.4,306.0 737.4,304.0 737.4,302.0 737.4,300.0 737.4,298.0 737.4,296.0 737.4,294.0 737.4,292.0 737.4,290.0 737.4,288.0 737.4,286.0 737.4,284.0 737.4,282.0 737.4,280.0 737.4,278.0 737.4,276.0 737.4,274.0 737.4,272.0 737.4,270.0 737.4,268.0 737.4,266.0 737.4,264.0 737.4,262.0 737.4,260.0 737.4,258.0 737.4,256.0 737.4,254.0 737.4,252.0 737.4,250.0 737.4,248.0 737.4,246.0 737.4,244.0 737.3,242.0 737.3,240.0 737.3,238.0 737.3,236.0 737.3,234.0 737.2,232.0 737.2,230.0 737.2,228.0 737.2,226.0 737.2,224.0 737.1,222.0 737.1,220.0 737.1,218.0 737.1,216.0 737.1,214.0 737.0,212.0 737.0,210.0 737.0,208.0 737.0,206.0 737.0,204.0 736.9,202.0 736.9,200.0 736.9,198.0 736.9,196.0 736.9,194.0 736.8,192.0 736.8,190.0 736.8,188.0 736.7,186.0 736.7,184.0 736.7,182.0 736.7,180.0 736.6,178.0 736.6,176.0 736.6,174.0 736.5,172.0 736.5,170.0 736.5,168.0 736.5,166.0 736.4,164.0 736.4,162.0 736.4,160.0 736.3,158.0 736.3,156.0 736.3,154.0 736.2,152.0 736.2,150.0 736.2,148.0 736.2,146.0 736.1,144.0 736.1,142.0 736.1,140.0 736.0,138.0 736.0,136.0 736.0,134.0 736.0,132.0 735.9,130.0 735.9,128.0 735.9,126.0 735.8,124.0 735.8,122.0 735.7,120.0 735.7,118.0 735.6,116.0 735.6,114.0 735.6,112.0 735.5,110.0 735.5,108.0 735.4,106.0 735.4,104.0 735.3,102.0 735.3,100.0 735.2,98.0 735.2,96.0 735.2,94.0 735.1,92.0 735.1,90.0 735.0,88.0 735.0,86.0 734.9,84.0 734.9,82.0 734.9,80.0 734.8,78.0 734.8,76.0 734.7,74.0 734.7,72.0 734.6,70.0 734.6,68.0 734.6,66.0 734.5,64.0 734.5,62.0 734.4,60.0 734.4,58.0 734.3,56.0 734.3,54.0 734.2,52.0 734.2,50.0 734.2,48.0 734.1,46.0 734.1,44.0 734.0,42.0 734.0,40.0 733.9,38.0 733.9,36.0" fill="#000"/><path d="M736 335 L741.500 361 L742.500 370 L742.500 452 L741.500 461 L737 479z" fill="#000"/><polygon points="719.5,36.0 719.5,38.0 719.5,40.0 719.6,42.0 719.6,44.0 719.6,46.0 719.6,48.0 719.7,50.0 719.7,52.0 719.7,54.0 719.7,56.0 719.8,58.0 719.8,60.0 719.8,62.0 719.8,64.0 719.9,66.0 719.9,68.0 719.9,70.0 719.9,72.0 720.0,74.0 720.0,76.0 720.0,78.0 720.0,80.0 720.0,82.0 720.1,84.0 720.1,86.0 720.1,88.0 720.1,90.0 720.2,92.0 720.2,94.0 720.2,96.0 720.2,98.0 720.3,100.0 720.3,102.0 720.3,104.0 720.3,106.0 720.4,108.0 720.4,110.0 720.4,112.0 720.4,114.0 720.5,116.0 720.5,118.0 720.5,120.0 720.5,122.0 720.6,124.0 720.6,126.0 720.6,128.0 720.6,130.0 720.6,132.0 720.6,134.0 720.6,136.0 720.7,138.0 720.7,140.0 720.7,142.0 720.7,144.0 720.7,146.0 720.7,146.4 734.8,146.4 734.8,146.0 734.7,144.0 734.7,142.0 734.7,140.0 734.6,138.0 734.6,136.0 734.6,134.0 734.6,132.0 734.5,130.0 734.5,128.0 734.5,126.0 734.4,124.0 734.4,122.0 734.3,120.0 734.3,118.0 734.2,116.0 734.2,114.0 734.2,112.0 734.1,110.0 734.1,108.0 734.0,106.0 734.0,104.0 733.9,102.0 733.9,100.0 733.8,98.0 733.8,96.0 733.8,94.0 733.7,92.0 733.7,90.0 733.6,88.0 733.6,86.0 733.5,84.0 733.5,82.0 733.5,80.0 733.4,78.0 733.4,76.0 733.3,74.0 733.3,72.0 733.2,70.0 733.2,68.0 733.2,66.0 733.1,64.0 733.1,62.0 733.0,60.0 733.0,58.0 732.9,56.0 732.9,54.0 732.8,52.0 732.8,50.0 732.8,48.0 732.7,46.0 732.7,44.0 732.6,42.0 732.6,40.0 732.5,38.0 732.5,36.0" fill="#00aa78"/><polygon points="720.7,146.4 720.7,148.0 720.7,150.0 720.7,152.0 720.8,154.0 720.8,156.0 720.8,158.0 720.8,160.0 720.8,162.0 720.8,164.0 720.8,166.0 720.8,168.0 720.8,170.0 720.9,172.0 720.9,174.0 720.9,176.0 720.9,178.0 720.9,180.0 720.9,182.0 720.9,184.0 720.9,186.0 720.9,188.0 721.0,190.0 721.0,192.0 721.0,194.0 721.0,196.0 721.0,198.0 721.0,200.0 721.0,202.0 721.0,204.0 721.0,206.0 721.0,208.0 721.1,210.0 721.1,212.0 721.1,214.0 721.1,216.0 721.1,218.0 721.1,220.0 721.1,222.0 721.1,224.0 721.1,226.0 721.1,228.0 721.1,230.0 721.1,232.0 721.2,234.0 721.2,236.0 721.2,238.0 721.2,240.0 721.2,242.0 721.2,244.0 721.2,246.0 721.2,248.0 721.2,250.0 721.2,252.0 721.2,254.0 721.2,256.0 721.3,258.0 721.3,260.0 721.3,262.0 721.3,264.0 721.3,266.0 721.3,268.0 721.3,270.0 721.3,272.0 721.3,274.0 721.3,276.0 721.3,278.0 721.3,280.0 721.4,282.0 721.4,284.0 721.4,286.0 721.4,288.0 721.4,290.0 721.4,292.0 721.4,294.0 721.4,296.0 721.4,298.0 721.4,300.0 721.4,302.0 721.4,304.0 721.5,306.0 721.5,308.0 721.5,310.0 721.5,312.0 721.5,314.0 721.5,316.0 721.5,318.0 721.5,320.0 721.5,322.0 721.5,324.0 721.5,326.0 721.5,328.0 721.6,330.0 721.6,332.0 721.6,334.0 721.6,336.0 721.6,338.0 721.6,340.0 721.6,342.0 721.6,344.0 721.6,346.0 721.6,348.0 721.6,350.0 721.6,352.0 721.6,354.0 721.6,356.0 721.6,358.0 721.6,360.0 721.6,362.0 721.6,364.0 721.6,366.0 721.6,368.0 721.6,370.0 721.6,372.0 721.6,374.0 721.6,376.0 721.6,378.0 721.6,380.0 721.6,382.0 721.6,384.0 721.6,386.0 721.6,388.0 721.6,390.0 721.6,392.0 721.6,394.0 721.6,396.0 721.6,398.0 721.6,400.0 721.6,402.0 721.6,404.0 721.6,406.0 721.6,408.0 721.6,410.0 721.6,412.0 721.6,414.0 721.6,416.0 721.6,418.0 721.6,420.0 721.6,422.0 721.6,424.0 721.6,426.0 721.6,428.0 721.6,430.0 721.6,432.0 721.6,434.0 721.6,436.0 721.6,438.0 721.6,440.0 721.6,442.0 721.6,444.0 721.6,446.0 721.6,448.0 721.6,450.0 721.6,452.0 721.6,454.0 721.6,456.0 721.6,458.0 721.6,460.0 721.6,462.0 721.6,464.0 721.6,466.0 721.6,468.0 721.6,470.0 721.6,472.0 721.6,474.0 721.6,476.0 721.6,478.0 721.6,480.0 721.6,482.0 721.6,484.0 721.6,486.0 721.6,488.0 721.6,490.0 721.5,492.0 721.5,494.0 721.5,496.0 721.5,498.0 721.5,500.0 721.5,502.0 721.5,504.0 721.5,506.0 721.5,508.0 721.5,510.0 721.5,512.0 721.5,514.0 721.5,516.0 721.4,518.0 721.4,520.0 721.4,522.0 721.4,524.0 721.4,526.0 721.4,528.0 721.4,530.0 721.4,532.0 721.4,534.0 721.3,536.0 721.3,538.0 721.3,540.0 721.3,542.0 721.3,544.0 721.2,546.0 721.2,548.0 721.2,550.0 721.2,552.0 721.2,554.0 721.2,556.0 721.1,558.0 721.1,560.0 721.1,562.0 721.1,564.0 721.1,566.0 721.0,568.0 721.0,570.0 721.0,572.0 721.0,574.0 721.0,576.0 720.9,578.0 720.9,580.0 720.9,582.0 720.9,584.0 720.9,586.0 720.8,588.0 720.8,590.0 720.8,592.0 720.8,594.0 720.8,596.0 720.8,598.0 720.7,600.0 720.7,602.0 720.7,604.0 720.7,606.0 720.7,608.0 720.6,610.0 720.6,612.0 720.6,614.0 720.6,616.0 720.6,618.0 720.5,620.0 720.5,622.0 720.5,624.0 720.5,626.0 720.5,628.0 720.4,630.0 720.4,632.0 720.4,634.0 720.4,636.0 720.4,638.0 720.4,640.0 720.3,642.0 720.3,644.0 720.3,646.0 720.3,648.0 720.3,650.0 720.2,652.0 720.2,654.0 720.2,656.0 720.2,658.0 720.2,660.0 720.1,662.0 720.1,664.0 720.1,666.0 720.1,668.0 720.1,670.0 720.0,672.0 720.0,674.0 720.0,676.0 720.0,677.0 734.6,677.0 734.6,676.0 734.6,674.0 734.7,672.0 734.7,670.0 734.7,668.0 734.8,666.0 734.8,664.0 734.8,662.0 734.9,660.0 734.9,658.0 734.9,656.0 734.9,654.0 735.0,652.0 735.0,650.0 735.0,648.0 735.1,646.0 735.1,644.0 735.1,642.0 735.2,640.0 735.2,638.0 735.2,636.0 735.2,634.0 735.3,632.0 735.3,630.0 735.3,628.0 735.4,626.0 735.4,624.0 735.4,622.0 735.5,620.0 735.5,618.0 735.5,616.0 735.5,614.0 735.6,612.0 735.6,610.0 735.6,608.0 735.7,606.0 735.7,604.0 735.7,602.0 735.8,600.0 735.8,598.0 735.8,596.0 735.8,594.0 735.9,592.0 735.9,590.0 735.9,588.0 736.0,586.0 736.0,584.0 736.0,582.0 736.1,580.0 736.1,578.0 736.1,576.0 736.1,574.0 736.2,572.0 736.2,570.0 736.2,568.0 736.3,566.0 736.3,564.0 736.3,562.0 736.4,560.0 736.4,558.0 736.4,556.0 736.4,554.0 736.5,552.0 736.5,550.0 736.5,548.0 736.6,546.0 736.6,544.0 736.6,542.0 736.7,540.0 736.7,538.0 736.7,536.0 736.7,534.0 736.8,532.0 736.8,530.0 736.8,528.0 736.7,526.0 736.7,524.0 736.7,522.0 736.6,520.0 736.6,518.0 736.6,516.0 736.6,514.0 736.5,512.0 736.5,510.0 736.5,508.0 736.4,506.0 736.4,504.0 736.4,502.0 736.3,500.0 736.3,498.0 736.3,496.0 736.3,494.0 736.2,492.0 736.2,490.0 736.2,488.0 736.1,486.0 736.1,484.0 736.1,482.0 736.0,480.0 736.0,478.0 736.0,476.0 736.0,474.0 736.0,472.0 736.0,470.0 736.0,468.0 736.0,466.0 736.0,464.0 736.0,462.0 736.0,460.0 736.0,458.0 736.0,456.0 736.0,454.0 736.0,452.0 736.0,450.0 736.0,448.0 736.0,446.0 736.0,444.0 736.0,442.0 736.0,440.0 736.0,438.0 736.0,436.0 736.0,434.0 736.0,432.0 736.0,430.0 736.0,428.0 736.0,426.0 736.0,424.0 736.0,422.0 736.0,420.0 736.0,418.0 736.0,416.0 736.0,414.0 736.0,412.0 736.0,410.0 736.0,408.0 736.0,406.0 736.0,404.0 736.0,402.0 736.0,400.0 736.0,398.0 736.0,396.0 736.0,394.0 736.0,392.0 736.0,390.0 736.0,388.0 736.0,386.0 736.0,384.0 736.0,382.0 736.0,380.0 736.0,378.0 736.0,376.0 736.0,374.0 736.0,372.0 736.0,370.0 736.0,368.0 736.0,366.0 736.0,364.0 736.0,362.0 736.0,360.0 736.0,358.0 736.0,356.0 736.0,354.0 736.0,352.0 736.0,350.0 736.0,348.0 736.0,346.0 736.0,344.0 736.0,342.0 736.0,340.0 736.0,338.0 736.0,336.0 736.0,334.0 736.0,332.0 736.0,330.0 736.0,328.0 736.0,326.0 736.0,324.0 736.0,322.0 736.0,320.0 736.0,318.0 736.0,316.0 736.0,314.0 736.0,312.0 736.0,310.0 736.0,308.0 736.0,306.0 736.0,304.0 736.0,302.0 736.0,300.0 736.0,298.0 736.0,296.0 736.0,294.0 736.0,292.0 736.0,290.0 736.0,288.0 736.0,286.0 736.0,284.0 736.0,282.0 736.0,280.0 736.0,278.0 736.0,276.0 736.0,274.0 736.0,272.0 736.0,270.0 736.0,268.0 736.0,266.0 736.0,264.0 736.0,262.0 736.0,260.0 736.0,258.0 736.0,256.0 736.0,254.0 736.0,252.0 736.0,250.0 736.0,248.0 736.0,246.0 736.0,244.0 735.9,242.0 735.9,240.0 735.9,238.0 735.9,236.0 735.9,234.0 735.8,232.0 735.8,230.0 735.8,228.0 735.8,226.0 735.8,224.0 735.7,222.0 735.7,220.0 735.7,218.0 735.7,216.0 735.7,214.0 735.6,212.0 735.6,210.0 735.6,208.0 735.6,206.0 735.6,204.0 735.5,202.0 735.5,200.0 735.5,198.0 735.5,196.0 735.5,194.0 735.4,192.0 735.4,190.0 735.4,188.0 735.3,186.0 735.3,184.0 735.3,182.0 735.3,180.0 735.2,178.0 735.2,176.0 735.2,174.0 735.1,172.0 735.1,170.0 735.1,168.0 735.1,166.0 735.0,164.0 735.0,162.0 735.0,160.0 734.9,158.0 734.9,156.0 734.9,154.0 734.8,152.0 734.8,150.0 734.8,148.0 734.8,146.4" fill="#00aa00"/><polygon points="720.0,677.0 720.0,678.0 719.9,680.0 719.9,682.0 719.8,684.0 719.8,686.0 719.7,688.0 719.7,690.0 719.7,692.0 719.6,694.0 719.6,696.0 719.5,698.0 719.5,700.0 719.4,702.0 719.4,704.0 719.3,706.0 719.3,708.0 719.2,710.0 719.2,712.0 719.1,714.0 719.1,716.0 719.0,718.0 719.0,720.0 719.0,722.0 718.9,724.0 718.9,726.0 718.8,728.0 718.8,730.0 718.7,732.0 718.7,734.0 718.6,736.0 718.6,738.0 718.5,740.0 718.5,742.0 718.4,744.0 718.4,746.0 718.3,748.0 718.3,750.0 718.3,752.0 718.2,754.0 718.2,756.0 718.1,758.0 718.1,760.0 718.0,762.0 718.0,764.0 717.9,766.0 717.9,768.0 717.8,770.0 717.8,772.0 717.7,774.0 717.7,776.0 717.7,778.0 717.6,780.0 717.6,782.0 717.5,784.0 717.5,786.0 717.4,788.0 717.4,790.0 717.3,792.0 717.3,794.0 717.2,796.0 717.2,798.0 717.1,800.0 717.1,802.0 717.0,804.0 717.0,806.0 717.0,808.0 731.7,808.0 731.7,806.0 731.7,804.0 731.8,802.0 731.8,800.0 731.9,798.0 731.9,796.0 732.0,794.0 732.0,792.0 732.1,790.0 732.1,788.0 732.1,786.0 732.2,784.0 732.2,782.0 732.3,780.0 732.3,778.0 732.4,776.0 732.4,774.0 732.5,772.0 732.5,770.0 732.6,768.0 732.6,766.0 732.6,764.0 732.7,762.0 732.7,760.0 732.8,758.0 732.8,756.0 732.9,754.0 732.9,752.0 733.0,750.0 733.0,748.0 733.0,746.0 733.1,744.0 733.1,742.0 733.2,740.0 733.2,738.0 733.3,736.0 733.3,734.0 733.4,732.0 733.4,730.0 733.5,728.0 733.5,726.0 733.5,724.0 733.6,722.0 733.6,720.0 733.7,718.0 733.7,716.0 733.8,714.0 733.8,712.0 733.9,710.0 733.9,708.0 733.9,706.0 734.0,704.0 734.0,702.0 734.1,700.0 734.1,698.0 734.2,696.0 734.2,694.0 734.3,692.0 734.3,690.0 734.4,688.0 734.4,686.0 734.4,684.0 734.5,682.0 734.5,680.0 734.6,678.0 734.6,677.0" fill="#00aa78"/><path d="M719.2 49.4L733.3 49.4" stroke="#000" stroke-width="1.400"/><path d="M719.4 67.5L733.7 67.5" stroke="#000" stroke-width="1.400"/><path d="M719.6 85.7L734.1 85.7" stroke="#000" stroke-width="1.400"/><path d="M719.8 103.8L734.5 103.8" stroke="#000" stroke-width="1.400"/><path d="M720.0 121.9L734.9 121.9" stroke="#000" stroke-width="1.400"/><path d="M720.2 140.0L735.2 140.0" stroke="#000" stroke-width="1.400"/><path d="M720.3 158.2L735.4 158.2" stroke="#000" stroke-width="1.400"/><path d="M720.4 176.3L735.7 176.3" stroke="#000" stroke-width="1.400"/><path d="M720.5 194.4L736.0 194.4" stroke="#000" stroke-width="1.400"/><path d="M720.6 212.6L736.2 212.6" stroke="#000" stroke-width="1.400"/><path d="M720.6 230.7L736.3 230.7" stroke="#000" stroke-width="1.400"/><path d="M720.7 248.8L736.5 248.8" stroke="#000" stroke-width="1.400"/><path d="M720.8 267.0L736.5 267.0" stroke="#000" stroke-width="1.400"/><path d="M720.9 285.1L736.5 285.1" stroke="#000" stroke-width="1.400"/><path d="M720.9 303.2L736.5 303.2" stroke="#000" stroke-width="1.400"/><path d="M721.0 321.3L736.5 321.3" stroke="#000" stroke-width="1.400"/><path d="M721.1 339.5L736.5 339.5" stroke="#000" stroke-width="1.400"/><path d="M721.1 357.6L736.5 357.6" stroke="#000" stroke-width="1.400"/><path d="M721.1 375.7L736.5 375.7" stroke="#000" stroke-width="1.400"/><path d="M721.1 393.9L736.5 393.9" stroke="#000" stroke-width="1.400"/><path d="M721.1 412.0L736.5 412.0" stroke="#000" stroke-width="1.400"/><path d="M721.1 430.1L736.5 430.1" stroke="#000" stroke-width="1.400"/><path d="M721.1 448.3L736.5 448.3" stroke="#000" stroke-width="1.400"/><path d="M721.1 466.4L736.5 466.4" stroke="#000" stroke-width="1.400"/><path d="M721.1 484.5L736.6 484.5" stroke="#000" stroke-width="1.400"/><path d="M721.0 502.6L736.9 502.6" stroke="#000" stroke-width="1.400"/><path d="M720.9 520.8L737.2 520.8" stroke="#000" stroke-width="1.400"/><path d="M720.8 538.9L737.2 538.9" stroke="#000" stroke-width="1.400"/><path d="M720.6 557.0L736.9 557.0" stroke="#000" stroke-width="1.400"/><path d="M720.5 575.2L736.6 575.2" stroke="#000" stroke-width="1.400"/><path d="M720.3 593.3L736.4 593.3" stroke="#000" stroke-width="1.400"/><path d="M720.1 611.4L736.1 611.4" stroke="#000" stroke-width="1.400"/><path d="M720.0 629.6L735.8 629.6" stroke="#000" stroke-width="1.400"/><path d="M719.8 647.7L735.5 647.7" stroke="#000" stroke-width="1.400"/><path d="M719.6 665.8L735.3 665.8" stroke="#000" stroke-width="1.400"/><path d="M719.3 683.9L734.9 683.9" stroke="#000" stroke-width="1.400"/><path d="M718.9 702.1L734.5 702.1" stroke="#000" stroke-width="1.400"/><path d="M718.5 720.2L734.1 720.2" stroke="#000" stroke-width="1.400"/><path d="M718.1 738.3L733.7 738.3" stroke="#000" stroke-width="1.400"/><path d="M717.7 756.5L733.3 756.5" stroke="#000" stroke-width="1.400"/><path d="M717.2 774.6L732.9 774.6" stroke="#000" stroke-width="1.400"/><path d="M716.8 792.7L732.5 792.7" stroke="#000" stroke-width="1.400"/><path d="M738 370 Q759 411 738 452.500 Q736 411 738 370z" fill="#909c1a" stroke="#2a2a00" stroke-width="0.800"/><path d="M738 372 Q751.500 411 738 450.500M738 375 Q745.500 411 738 447.500" fill="none" stroke="#1a1a00" stroke-width="1"/><path d="M744.500 392 Q751.500 411 744.500 430 Q743 411 744.500 392z" fill="#d09a14" stroke="#4a3800" stroke-width="0.500"/><path d="M737 411.500h12.500M738 392.500h7.500M738 430h7.500M738 381h4M738 441.500h4" stroke="#2a2400" stroke-width="0.800"/><rect x="435.500" y="250.50" width="19" height="20.90" fill="#ff0000" stroke="#000" stroke-width="1"/><rect x="435.500" y="271.40" width="19" height="20.90" fill="#ffb200" stroke="#000" stroke-width="1"/><rect x="435.500" y="292.30" width="19" height="20.90" fill="#ffff00" stroke="#000" stroke-width="1"/><rect x="435.500" y="313.20" width="19" height="20.90" fill="#b2ff00" stroke="#000" stroke-width="1"/><rect x="435.500" y="334.10" width="19" height="20.90" fill="#00ff00" stroke="#000" stroke-width="1"/><rect x="435.500" y="355.00" width="19" height="20.90" fill="#00ffb2" stroke="#000" stroke-width="1"/><rect x="435.500" y="375.90" width="19" height="20.90" fill="#00ffff" stroke="#000" stroke-width="1"/><rect x="435.500" y="396.80" width="19" height="20.90" fill="#00b2ff" stroke="#000" stroke-width="1"/><rect x="435.500" y="417.70" width="19" height="20.90" fill="#0000ff" stroke="#000" stroke-width="1"/><rect x="950" y="746" width="8" height="14.500" fill="#000"/></svg>
<span class="vt b" style="top:17.7px;letter-spacing:-0.28px">A: Fixed Plate (New Bullet Design)</span>
<span class="vt" style="top:36.42px;letter-spacing:0.09px">Total Deformation</span>
<span class="vt" style="top:55.14px;letter-spacing:-0.02px">Type: Total Deformation</span>
<span class="vt" style="top:73.86px;letter-spacing:0.05px">Unit: m</span>
<span class="vt" style="top:92.58px;letter-spacing:-0.47px">Time: 5.e-003</span>
<span class="vt" style="top:111.3px;letter-spacing:-0.34px">Cycle Number: 88651</span>
<span class="vt" style="top:130.02px;letter-spacing:-0.61px">Max: 0.00385</span>
<span class="vt" style="top:148.74px;letter-spacing:0.15px">Min: 0</span>
<span class="vt" style="top:167.46px;letter-spacing:-0.42px">21/6/2021 4:24 PM</span>
<span class="lg" style="top:204.0px;letter-spacing:-0.94px">0.00385</span>
<span class="lg" style="top:224.8px;letter-spacing:-0.83px">0.0034222</span>
<span class="lg" style="top:245.6px;letter-spacing:-0.83px">0.0029944</span>
<span class="lg" style="top:266.4px;letter-spacing:-0.83px">0.0025667</span>
<span class="lg" style="top:287.2px;letter-spacing:-0.83px">0.0021389</span>
<span class="lg" style="top:308.0px;letter-spacing:-0.56px">0.0017111</span>
<span class="lg" style="top:328.8px;letter-spacing:-0.83px">0.0012833</span>
<span class="lg" style="top:349.6px;letter-spacing:-0.76px">0.00085555</span>
<span class="lg" style="top:370.4px;letter-spacing:-0.76px">0.00042778</span>
<span class="lg" style="top:391.2px;letter-spacing:0px">0</span>
<span class="lg" style="left:517px;top:691.4px">0.00</span>
</div>

<!-- graph bar -->
<div class="abs" id="graph" style="left:416px;top:812px;width:541px;height:25px;background:#eeeef2;border-top:1px solid #d0d1e6;border-left:1px solid #d5d6ea;border-bottom:1px solid #c5d6ee;font-size:15px"><span class="abs" style="left:7px;top:2.500px;color:#2b2b2b;line-height:18px;letter-spacing:-0.6px">Graph</span><div class="dots" style="left:53px;top:10px;width:488px"></div></div>

<!-- annotations -->
<svg style="left:0;top:0" width="957" height="837" viewBox="0 0 957 837">
<path d="M168 238 C158 245 148 258 143 272 C137 288 135.500 305 139 325 C142 342 150 356 165 365 C182 375 205 382 232 382.500 C255 383 278 375 296 358 C309 344 317.500 326 318 308 C318.500 290 313 274 302 263 C290 250 270 241 245 236 C222 231.500 197 229 180 232 C173 233.500 168 236 166 239" fill="none" stroke="#ee1c25" stroke-width="2.400" stroke-linecap="round" stroke-linejoin="round"/>
<path d="M356.500 254.500 C350 268 344 281 340 291 C336 300 332 306 330 310 C340 313 352 317 362 321 C374 326 384 328 393 329.500" fill="none" stroke="#ee1c25" stroke-width="2.400" stroke-linecap="round" stroke-linejoin="round"/>
<path d="M330 310 C338 306 346 303 354 300 C368 295 382 292 395 287 C403 283 410 278 417 274 C427 266 436 259 444 252.500 C454 244 464 236 474 228 C483 220 492 213 501 206 C508 200 514 195 520 191 C527 186 533 183 539 180" fill="none" stroke="#ee1c25" stroke-width="2.400" stroke-linecap="round" stroke-linejoin="round"/>
</svg>

</body>
</html>
